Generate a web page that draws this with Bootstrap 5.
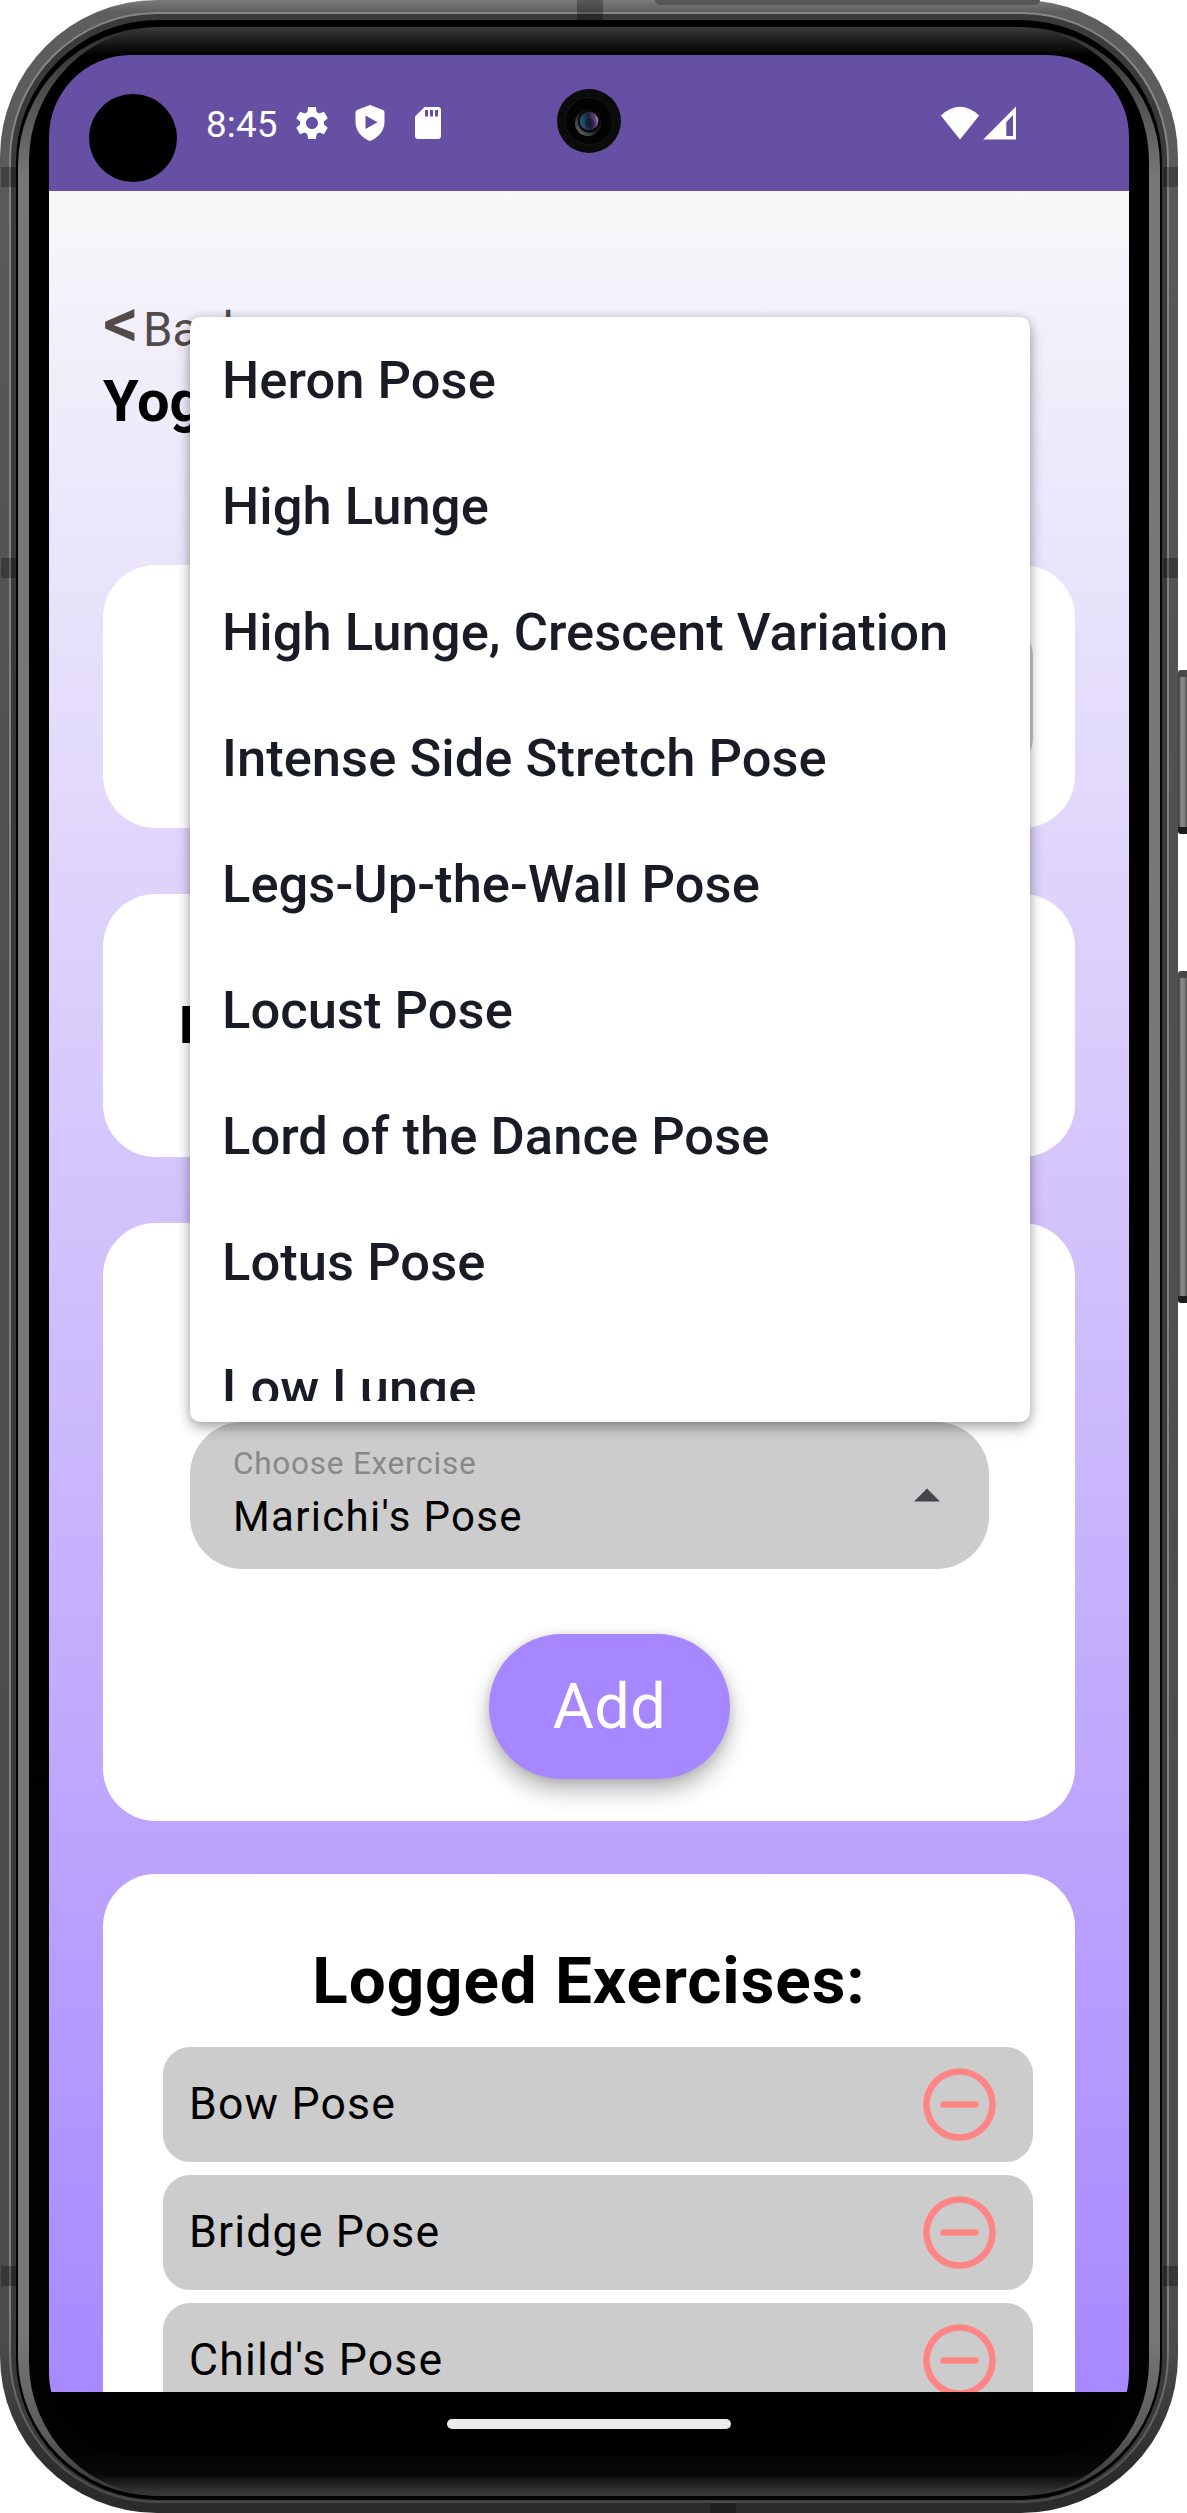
<!DOCTYPE html>
<html lang="en">
<head>
<meta charset="utf-8">
<meta name="viewport" content="width=device-width, initial-scale=1">
<title>Yoga</title>
<link href="https://cdn.jsdelivr.net/npm/bootstrap@5.3.0/dist/css/bootstrap.min.css" rel="stylesheet">
<style>
body{margin:0;background:#fff;font-family:Roboto,sans-serif;color:#000;overflow:hidden}
.device{width:1187px;height:2513px}
/* phone body: nested rings, each one a flex box padded by the ring's width */
.shell{width:1178px;height:2513px;border-radius:157px;background:linear-gradient(#7c7c7c 0,#5e5e5e 12px,#5a5a5a 160px,#505050 800px,#4c4c4c 2340px,#2b2b2b 2480px);padding:12px 9px 10px}
.ring-light{border-radius:148px;background:linear-gradient(#858585,#808080 2300px,#4a4a4a);padding:2px 2px 2px}
.ring-dark{border-radius:146px;background:#3a3a3a;padding:6px 5px 1px}
.ring-black{border-radius:142px;background:#000;padding:7px 2px 4px}
.ring-steel{border-radius:139px;background:linear-gradient(#303030 0,#3c3c3c 30px,#777 150px,#777 2310px,#5a5a5a 2410px,#333);padding:0 11px}
.bezel{border-radius:134px;background:linear-gradient(#3a3a3a 0,#1c1c1c 14px,#000 29px,#020202 2420px,#090909 2448px,#333 2464px,#383838);padding:28px 20px 0}
.screen{width:1080px;height:2400px;border-radius:82px;background:#000}
.side-key{width:9px;right:0;background:linear-gradient(90deg,#333,#858585 35%,#858585 65%,#555);border-radius:3px 0 0 3px;border-top:7px solid #484848;border-bottom:7px solid #1c1c1c}
.key-a{top:670px;height:164px}
.key-b{top:971px;height:332px}
.antenna{background:rgba(0,0,0,.28);width:15px;height:20px}
.antenna-top,.antenna-bottom{width:26px}
.top-slit{left:655px;top:0;width:385px;height:5px;background:#565656;border-radius:0 0 12px 12px}
.statusbar{height:136px;background:#6650a4;padding:0 112px 0 157px}
.clock{font-size:36.75px;line-height:44px;width:84px;padding-top:3px;letter-spacing:.2px}
.statusbar svg{display:block;flex:none}
.assist-dot{left:40px;top:39px;width:88px;height:88px;background:#000;border-radius:50%}
.camera{left:508px;top:34px}
.app{height:2201px;background:linear-gradient(#f8f8f8 0,#f3f1fa 110px,#a787ff 2230px);padding:110px 54px 0}
.back-link{height:56px;line-height:59px;font-size:47.25px;color:#534a4a}
.back-link .chev{font-size:71px;font-weight:500;width:40px;line-height:44px}
.app-title{font-size:57.75px;line-height:69px;font-weight:700;margin:10px 0 0;height:68px}
.panel{background:#fff;border-radius:52.5px;flex:none}
.panel-sm{height:263px;padding:0 42px}
.stack{gap:66px;padding-top:130px}
.date-input{background:#ccc;border-radius:26px;height:136px;margin-left:60px}
.panel-label{font-size:52.5px;font-weight:700;padding-left:34px}
.panel-pick{height:598px;padding:199px 87px 0}
.picker{width:799px;height:147px;background:#ccc;border-radius:52.5px;padding:25px 49px 0 43px}
.picker-label{font-size:31.5px;line-height:34px;letter-spacing:.76px;color:#888}
.picker-value{font-size:42px;line-height:50px;letter-spacing:1.33px;margin-top:11px}
.picker svg{margin-top:41px}
.menu-pop{left:0;bottom:147px;width:840px;height:1105px;background:#fff;border-radius:10.5px;box-shadow:0 6px 14px rgba(0,0,0,.3),0 0 10px rgba(0,0,0,.13);padding-bottom:21px;z-index:5}
.menu-pop ul{height:1084px}
.menu-pop li{height:126px;line-height:126px;padding-left:32px;font-size:52.5px;font-weight:500;color:#191c24;white-space:nowrap;letter-spacing:.04px}
.btn-add,.btn-add:hover{width:241px;height:145px;border-radius:73px;background:#a787ff;color:#fff;font-size:63px;line-height:1;letter-spacing:.4px;border:0;margin-top:65px;margin-left:41px;box-shadow:0 12px 22px rgba(0,0,0,.27),0 1px 10px rgba(0,0,0,.12)}
.panel-log{height:640px;margin-top:-13px;padding:70px 42px 0 60px}
.log-title{font-size:65.6px;line-height:74px;letter-spacing:.95px;font-weight:700;margin:0 18px 29px 0}
.log-list{gap:13px}
.log-row{height:115px;flex:none;background:#ccc;border-radius:27px;padding:0 37px 0 26px;font-size:44.6px;letter-spacing:1.15px}
.log-row span{line-height:60px;padding-bottom:2px}
.navpill{width:284px;height:10px;border-radius:5px;background:#ebebeb}
.navzone{height:63px}
</style>
</head>
<body>
<div class="device position-relative">
  <div class="side-key key-a position-absolute"></div>
  <div class="side-key key-b position-absolute"></div>
  <div class="shell">
    <div class="ring-light h-100"><div class="ring-dark h-100"><div class="ring-black h-100"><div class="ring-steel h-100"><div class="bezel h-100">
      <main class="screen position-relative overflow-hidden d-flex flex-column">
        <header class="statusbar d-flex align-items-center text-white flex-shrink-0">
          <span class="clock">8:45</span>
          <svg width="40" height="40" viewBox="0 0 24 24" fill="#fff" style="margin:0 18px 0 2px"><path fill-rule="evenodd" d="M19.14 12.94c.04-.3.06-.61.06-.94 0-.32-.02-.64-.07-.94l2.03-1.58c.18-.14.23-.41.12-.61l-1.92-3.32c-.12-.22-.37-.29-.59-.22l-2.39.96c-.5-.38-1.03-.7-1.62-.94L14.4 2.81c-.04-.24-.24-.41-.48-.41h-3.84c-.24 0-.43.17-.47.41l-.36 2.54c-.59.24-1.13.57-1.62.94l-2.39-.96c-.22-.08-.47 0-.59.22L2.74 8.87c-.12.21-.08.47.12.61l2.03 1.58c-.05.3-.09.63-.09.94s.02.64.07.94l-2.03 1.58c-.18.14-.23.41-.12.61l1.92 3.32c.12.22.37.29.59.22l2.39-.96c.5.38 1.03.7 1.62.94l.36 2.54c.05.24.24.41.48.41h3.84c.24 0 .44-.17.47-.41l.36-2.54c.59-.24 1.13-.56 1.62-.94l2.39.96c.22.08.47 0 .59-.22l1.92-3.32c.12-.22.07-.47-.12-.61l-2.01-1.58zM12 15.600c-1.980 0-3.600-1.620-3.600-3.600s1.620-3.600 3.600-3.600 3.600 1.620 3.600 3.600-1.620 3.600-3.600 3.600z"/></svg>
          <svg width="40" height="40" viewBox="0 0 40 40" style="margin-right:15px"><path fill="#fff" fill-rule="evenodd" d="M20 2L33 7Q34.500 7.600 34.500 9.500V19C34.500 28 28 35 20 38C12 35 5.500 28 5.500 19V9.500Q5.500 7.600 7 7ZM15.500 12.500V26L27.500 19.200Z"/></svg>
          <svg width="40" height="40" viewBox="0 0 40 40"><path fill="#fff" fill-rule="evenodd" d="M19.500 4H33Q36 4 36 7V33Q36 36 33 36H13Q10 36 10 33V13.500ZM20 7V13.500H23V7ZM25 7V13.500H28V7ZM30 7V13.500H33V7Z"/></svg>
          <svg class="ms-auto" width="40" height="36" viewBox="0 0 40 36"><path fill="#fff" d="M.8 10.500Q20-7 39.200 10.500L20 34.500Z"/></svg>
          <svg width="36" height="36" viewBox="0 0 36 36" style="margin-left:1px"><path fill="#fff" fill-rule="evenodd" d="M35 1.500V34.500H2.200ZM32 10L25.300 17V31H32Z"/></svg>
        </header>
        <div class="assist-dot position-absolute"></div>
        <svg class="camera position-absolute" width="64" height="64" viewBox="0 0 64 64">
          <defs>
            <linearGradient id="rim" x1="0" y1="1" x2="1" y2="0"><stop offset="0" stop-color="#777"/><stop offset=".5" stop-color="#1a1a1a"/><stop offset="1" stop-color="#111"/></linearGradient>
            <linearGradient id="lens" x1="0" y1=".5" x2="1" y2=".3"><stop offset="0" stop-color="#1d5f78"/><stop offset=".5" stop-color="#20203c"/><stop offset=".8" stop-color="#5b3f72"/><stop offset="1" stop-color="#b58fc8"/></linearGradient>
          </defs>
          <circle cx="32" cy="32" r="32" fill="#0b0b0b"/><circle cx="32" cy="32" r="23.500" fill="#030303" stroke="#141414"/>
          <circle cx="31" cy="34" r="13" fill="url(#rim)"/><circle cx="32" cy="32.500" r="11" fill="#08080c"/><circle cx="32" cy="32" r="9.300" fill="url(#lens)"/>
          <circle cx="32.500" cy="34" r="4.500" fill="#101024" opacity=".5"/>
        </svg>

        <section class="app d-flex flex-column flex-shrink-0 overflow-hidden">
          <a class="back-link d-flex text-decoration-none flex-shrink-0"><span class="chev">&lt;</span><span>Back</span></a>
          <h1 class="app-title flex-shrink-0">Yoga</h1>
          <div class="stack d-flex flex-column">
            <div class="panel panel-sm d-flex flex-column justify-content-center"><div class="date-input"></div></div>
            <div class="panel panel-sm d-flex align-items-center"><span class="panel-label">D</span></div>
            <div class="panel panel-pick d-flex flex-column align-items-start">
              <div class="picker position-relative d-flex justify-content-between align-items-start">
                <div><div class="picker-label">Choose Exercise</div><div class="picker-value">Marichi's Pose</div></div>
                <svg width="26" height="14" viewBox="0 0 26 14"><path fill="#49454f" d="M0 13.500L13 .5L26 13.500Z"/></svg>
                <div class="menu-pop position-absolute">
                  <ul class="list-unstyled m-0 overflow-hidden">
                    <li>Heron Pose</li><li>High Lunge</li><li>High Lunge, Crescent Variation</li><li>Intense Side Stretch Pose</li><li>Legs-Up-the-Wall Pose</li><li>Locust Pose</li><li>Lord of the Dance Pose</li><li>Lotus Pose</li><li>Low Lunge</li>
                  </ul>
                </div>
              </div>
              <button class="btn btn-add align-self-center" type="button">Add</button>
            </div>
            <div class="panel panel-log">
              <h2 class="log-title text-center">Logged Exercises:</h2>
              <div class="log-list d-flex flex-column">
                <div class="log-row d-flex align-items-center justify-content-between"><span>Bow Pose</span><svg width="73" height="73" viewBox="0 0 73 73" fill="none" stroke="#ff8585" stroke-width="6.600"><circle cx="36.500" cy="36.500" r="33"/><path stroke-linecap="round" d="M20.500 36.500H52.500"/></svg></div>
                <div class="log-row d-flex align-items-center justify-content-between"><span>Bridge Pose</span><svg width="73" height="73" viewBox="0 0 73 73" fill="none" stroke="#ff8585" stroke-width="6.600"><circle cx="36.500" cy="36.500" r="33"/><path stroke-linecap="round" d="M20.500 36.500H52.500"/></svg></div>
                <div class="log-row d-flex align-items-center justify-content-between"><span>Child's Pose</span><svg width="73" height="73" viewBox="0 0 73 73" fill="none" stroke="#ff8585" stroke-width="6.600"><circle cx="36.500" cy="36.500" r="33"/><path stroke-linecap="round" d="M20.500 36.500H52.500"/></svg></div>
              </div>
            </div>
          </div>
        </section>
        <footer class="navzone d-flex justify-content-center align-items-center flex-shrink-0"><div class="navpill"></div></footer>
      </main>
    </div></div></div></div></div>
  </div>
  <div class="top-slit position-absolute"></div>
  <div class="antenna antenna-top position-absolute" style="left:577px;top:0"></div>
  <div class="antenna antenna-bottom position-absolute" style="left:710px;top:2503px;height:10px"></div>
  <div class="antenna position-absolute" style="left:1px;top:167px"></div>
  <div class="antenna position-absolute" style="left:1px;top:558px"></div>
  <div class="antenna position-absolute" style="left:1px;top:2266px"></div>
  <div class="antenna position-absolute" style="left:1163px;top:167px"></div>
  <div class="antenna position-absolute" style="left:1163px;top:558px"></div>
  <div class="antenna position-absolute" style="left:1163px;top:2266px"></div>
</div>
<script src="https://cdn.jsdelivr.net/npm/bootstrap@5.3.0/dist/js/bootstrap.bundle.min.js"></script>
</body>
</html>
